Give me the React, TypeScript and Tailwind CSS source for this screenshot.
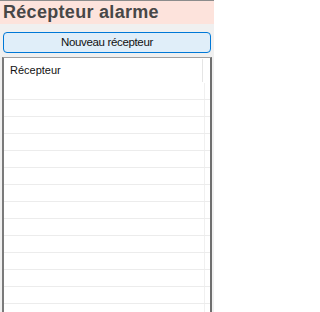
import React from "react";

export default function App() {
  const rows = Array.from({ length: 14 });
  return (
    <div
      className="w-[214px] h-[312px] overflow-hidden bg-[#f0f0f0] flex flex-col"
      style={{ fontFamily: '"Liberation Sans", Arial, sans-serif' }}
    >
      <div className="border-t border-[#8c8c8c] bg-[#fde3dc] h-[24px] shrink-0">
        <div className="pl-[3px] text-[18px] leading-[22px] font-bold text-[#474747] tracking-[0.3px]">
          Récepteur alarme
        </div>
      </div>
      <div className="pt-[8px] px-[3px] shrink-0">
        <button className="w-full h-[21px] rounded-[4px] border border-[#0078d7] bg-[#e0eef9] text-[11.5px] tracking-[-0.35px] text-[#111] flex items-center justify-center">
          Nouveau récepteur
        </button>
      </div>
      <div className="mt-[4px] mx-[2px] flex-1 bg-white border-t border-t-[#a0a0a0] border-l-2 border-r-2 border-l-[#7a7a7a] border-r-[#6f6f6f] flex flex-col">
        <div className="h-[25px] shrink-0 flex">
          <div className="w-[199px] flex items-center pl-[6px] text-[11px] text-[#111] border-r border-[#e5e5e5] my-[1px]">
            Récepteur
          </div>
          <div className="flex-1" />
        </div>
        {rows.map((_, i) => (
          <div key={i} className="h-[17px] shrink-0 border-b border-[#ececec] flex">
            <div className="w-[201px] border-r border-[#f0f0f0]" />
            <div className="flex-1" />
          </div>
        ))}
      </div>
    </div>
  );
}
